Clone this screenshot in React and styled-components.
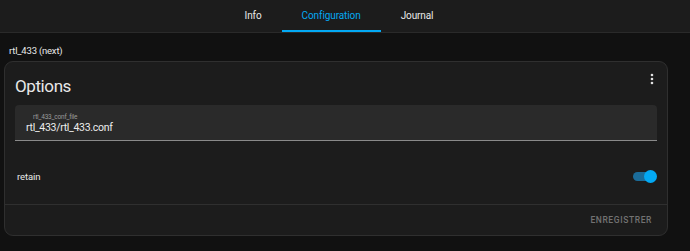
import styled, { createGlobalStyle } from "styled-components";

const GlobalStyle = createGlobalStyle`
  html, body {
    margin: 0;
    padding: 0;
    background: #111111;
    font-family: Roboto, "Noto Sans", sans-serif;
    color: #e1e1e1;
  }
`;

function Toggle({ on }) {
  return (
    <Track on={on}>
      <Thumb on={on} />
    </Track>
  );
}

function MenuIcon() {
  return (
    <MenuButton>
      <svg width="16" height="16" viewBox="0 0 24 24" fill="#e1e1e1">
        <path d="M12,16A2,2 0 0,1 14,18A2,2 0 0,1 12,20A2,2 0 0,1 10,18A2,2 0 0,1 12,16M12,10A2,2 0 0,1 14,12A2,2 0 0,1 12,14A2,2 0 0,1 10,12A2,2 0 0,1 12,10M12,4A2,2 0 0,1 14,6A2,2 0 0,1 12,8A2,2 0 0,1 10,6A2,2 0 0,1 12,4Z" />
      </svg>
    </MenuButton>
  );
}

export default function App() {
  const tabs = ["Info", "Configuration", "Journal"];
  return (
    <>
      <GlobalStyle />
      <Header>
        <Tabs>
          {tabs.map((t) => (
            <Tab key={t} active={t === "Configuration"}>
              {t}
            </Tab>
          ))}
        </Tabs>
      </Header>
      <Content>
        <AddonName>rtl_433 (next)</AddonName>
        <Card>
          <CardHeader>
            <Title>Options</Title>
            <MenuIcon />
          </CardHeader>
          <CardBody>
            <TextField>
              <FieldLabel>rtl_433_conf_file</FieldLabel>
              <FieldValue>rtl_433/rtl_433.conf</FieldValue>
            </TextField>
            <SwitchRow>
              <SwitchLabel>retain</SwitchLabel>
              <Toggle on />
            </SwitchRow>
          </CardBody>
          <CardActions>
            <SaveButton>Enregistrer</SaveButton>
          </CardActions>
        </Card>
      </Content>
    </>
  );
}

const Header = styled.div`
  height: 32px;
  background: #1c1c1c;
  border-bottom: 1px solid #2a2a2a;
`;

const Tabs = styled.div`
  display: flex;
  justify-content: center;
  height: 100%;
  padding-right: 12px;
`;

const Tab = styled.div`
  display: flex;
  align-items: center;
  padding: 0 20px;
  height: 100%;
  box-sizing: border-box;
  font-size: 10px;
  letter-spacing: -0.1px;
  color: ${(p) => (p.active ? "#03a9f4" : "#e8e8e8")};
  border-bottom: 2px solid ${(p) => (p.active ? "#03a9f4" : "transparent")};
  padding-top: 1px;
`;

const Content = styled.div`
  padding: 0 22px 0 4px;
`;

const AddonName = styled.div`
  font-size: 9.5px;
  letter-spacing: -0.2px;
  padding: 12px 0 0 5px;
  height: 16px;
  color: #e8e8e8;
`;

const Card = styled.div`
  background: #1c1c1c;
  border: 1px solid #2f2f2f;
  border-radius: 9px;
  width: 664px;
  box-sizing: border-box;
`;

const CardHeader = styled.div`
  display: flex;
  justify-content: space-between;
  align-items: flex-start;
  padding: 13px 7px 0 10px;
  height: 43px;
  box-sizing: border-box;
`;

const Title = styled.div`
  font-size: 17px;
  letter-spacing: -0.4px;
  color: #e8e8e8;
  padding-top: 1px;
`;

const MenuButton = styled.div`
  width: 16px;
  height: 16px;
  margin-top: -4px;
`;

const CardBody = styled.div`
  padding: 0 10px;
`;

const TextField = styled.div`
  background: #2a2a2a;
  border-radius: 4px 4px 0 0;
  border-bottom: 1px solid #8a8a8a;
  height: 36px;
  box-sizing: border-box;
  padding: 8px 11px 0;
`;

const FieldLabel = styled.div`
  font-size: 6.5px;
  letter-spacing: -0.2px;
  color: #9b9b9b;
  padding-left: 7px;
  line-height: 8px;
`;

const FieldValue = styled.div`
  font-size: 10.5px;
  letter-spacing: -0.3px;
  color: #ececec;
  line-height: 14px;
`;

const SwitchRow = styled.div`
  display: flex;
  justify-content: space-between;
  align-items: center;
  height: 63px;
  padding: 8px 0 0 2px;
  box-sizing: border-box;
`;

const SwitchLabel = styled.div`
  font-size: 9.5px;
  letter-spacing: -0.1px;
  color: #e8e8e8;
`;

const Track = styled.div`
  position: relative;
  width: 22px;
  height: 9px;
  border-radius: 5px;
  background: ${(p) => (p.on ? "#1b6c99" : "#555")};
  margin-right: 2px;
`;

const Thumb = styled.div`
  position: absolute;
  top: -2px;
  left: ${(p) => (p.on ? "11px" : "-2px")};
  width: 13px;
  height: 13px;
  border-radius: 50%;
  background: ${(p) => (p.on ? "#03a9f4" : "#bbb")};
`;

const CardActions = styled.div`
  border-top: 1px solid #2f2f2f;
  display: flex;
  justify-content: flex-end;
  height: 30px;
  align-items: center;
  padding: 0 15px;
`;

const SaveButton = styled.div`
  font-size: 8.5px;
  font-weight: 500;
  letter-spacing: 0.6px;
  text-transform: uppercase;
  color: #727272;
`;
